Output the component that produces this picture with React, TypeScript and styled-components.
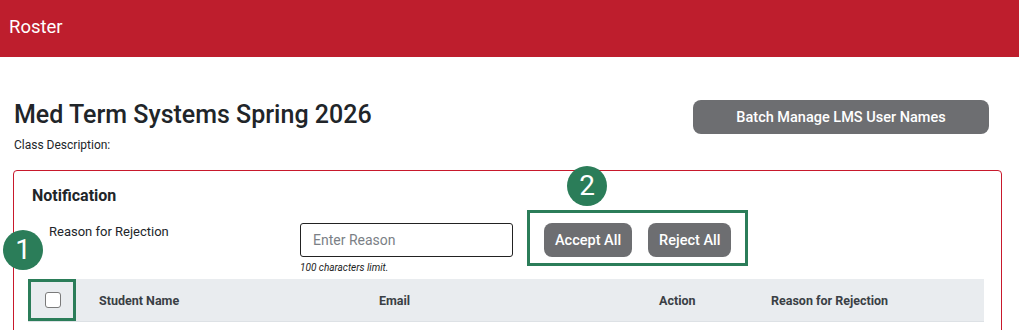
import React from 'react';
import styled, { createGlobalStyle } from 'styled-components';

const GlobalStyle = createGlobalStyle`
  html, body {
    margin: 0;
    padding: 0;
    background: #fff;
    font-family: Roboto, "Liberation Sans", Arial, sans-serif;
    color: #212529;
  }
  * { box-sizing: border-box; }
`;

const ANNOTATION = '#2b7d59';

const TopBar = styled('header')({
  height: '57px',
  backgroundColor: '#be1e2d',
  display: 'flex',
  alignItems: 'center',
  padding: '0 9px',
  color: '#fff',
  fontSize: '18.5px',
  paddingBottom: '3px',
});

const Page = styled('main')({
  padding: '43px 17px 0 13px',
});

const TitleRow = styled('div')({
  display: 'flex',
  justifyContent: 'space-between',
  alignItems: 'flex-start',
  paddingLeft: '1px',
});

const Title = styled('h1')({
  margin: 0,
  fontSize: '25px',
  lineHeight: '30px',
  fontWeight: 500,
  color: '#212529',
});

const Description = styled('div')({
  fontSize: '12px',
  lineHeight: '16px',
  marginTop: '7px',
});

const GreyButton = styled('button')(({ wide = false }: { wide?: boolean }) => ({
  height: '34px',
  padding: wide ? '0' : '0 11px',
  width: wide ? '296px' : 'auto',
  border: 'none',
  borderRadius: '8px',
  backgroundColor: '#6d6e71',
  color: '#fff',
  fontFamily: 'Roboto, "Liberation Sans", Arial, sans-serif',
  fontSize: '14.5px',
  fontWeight: 500,
  cursor: 'pointer',
}));

const BatchButton = styled(GreyButton)({
  marginRight: '13px',
});

const Card = styled('section')({
  marginTop: '17px',
  border: '1px solid #c8192c',
  borderRadius: '4px',
  padding: '14px 17px 40px 14px',
  position: 'relative',
});

const CardTitle = styled('h2')({
  margin: '0 0 0 4px',
  fontSize: '16px',
  lineHeight: '22px',
  fontWeight: 700,
});

const FormRow = styled('div')({
  display: 'flex',
  alignItems: 'flex-start',
  marginTop: '16px',
});

const Label = styled('div')({
  width: '272px',
  paddingLeft: '21px',
  fontSize: '13px',
  lineHeight: '17px',
});

const Field = styled('div')({
  display: 'flex',
  flexDirection: 'column',
  width: '213px',
});

const Input = styled('input')({
  height: '34px',
  width: '100%',
  border: '1px solid #222',
  borderRadius: '3px',
  padding: '0 12px',
  fontFamily: 'Roboto, "Liberation Sans", Arial, sans-serif',
  fontSize: '14px',
  color: '#333',
  outline: 'none',
  '&::placeholder': {
    color: '#7b7f86',
  },
});

const Hint = styled('div')({
  fontSize: '10px',
  fontStyle: 'italic',
  marginTop: '5px',
  color: '#222',
});

const ButtonGroup = styled('div')({
  display: 'flex',
  gap: '16px',
  marginLeft: '31px',
  position: 'relative',
});

const Highlight = styled('div')(
  ({ inset }: { inset: string }) => ({
    position: 'absolute',
    inset,
    border: `3px solid ${ANNOTATION}`,
    pointerEvents: 'none',
  })
);

const Badge = styled('div')(
  ({ left, top }: { left: string; top: string }) => ({
    position: 'absolute',
    left,
    top,
    width: '40px',
    height: '40px',
    borderRadius: '50%',
    backgroundColor: ANNOTATION,
    color: '#fff',
    fontSize: '28px',
    display: 'flex',
    alignItems: 'center',
    justifyContent: 'center',
    lineHeight: 1,
  })
);

const TableHead = styled('div')({
  marginTop: '6px',
  display: 'grid',
  gridTemplateColumns: '48px 280px 280px 112px 1fr',
  height: '43px',
  alignItems: 'center',
  backgroundColor: '#e9ecef',
  borderBottom: '1px solid #dde1e5',
});

const CheckCell = styled('div')({
  position: 'relative',
  height: '100%',
  display: 'flex',
  alignItems: 'center',
  justifyContent: 'center',
});

const Checkbox = styled('span')({
  width: '16px',
  height: '16px',
  border: '1px solid #7a7a7a',
  borderRadius: '3px',
  backgroundColor: '#fff',
  marginLeft: '2px',
});

const HeadCell = styled('div')({
  paddingLeft: '23px',
  fontSize: '12.5px',
  fontWeight: 700,
  color: '#3a3f45',
});

export default function App() {
  return (
    <>
      <GlobalStyle />
      <TopBar>Roster</TopBar>
      <Page>
        <TitleRow>
          <div>
            <Title>Med Term Systems Spring 2026</Title>
            <Description>Class Description:</Description>
          </div>
          <BatchButton wide>Batch Manage LMS User Names</BatchButton>
        </TitleRow>
        <Card>
          <CardTitle>Notification</CardTitle>
          <FormRow>
            <Label>Reason for Rejection</Label>
            <Field>
              <Input placeholder="Enter Reason" />
              <Hint>100 characters limit.</Hint>
            </Field>
            <ButtonGroup>
              <GreyButton>Accept All</GreyButton>
              <GreyButton>Reject All</GreyButton>
              <Highlight inset="-13px -17px -9px -17px" />
              <Badge left="23px" top="-57px">2</Badge>
            </ButtonGroup>
          </FormRow>
          <TableHead>
            <CheckCell>
              <Checkbox />
              <Highlight inset="0" />
              <Badge left="-25px" top="-49px">1</Badge>
            </CheckCell>
            <HeadCell>Student Name</HeadCell>
            <HeadCell>Email</HeadCell>
            <HeadCell>Action</HeadCell>
            <HeadCell>Reason for Rejection</HeadCell>
          </TableHead>
        </Card>
      </Page>
    </>
  );
}
